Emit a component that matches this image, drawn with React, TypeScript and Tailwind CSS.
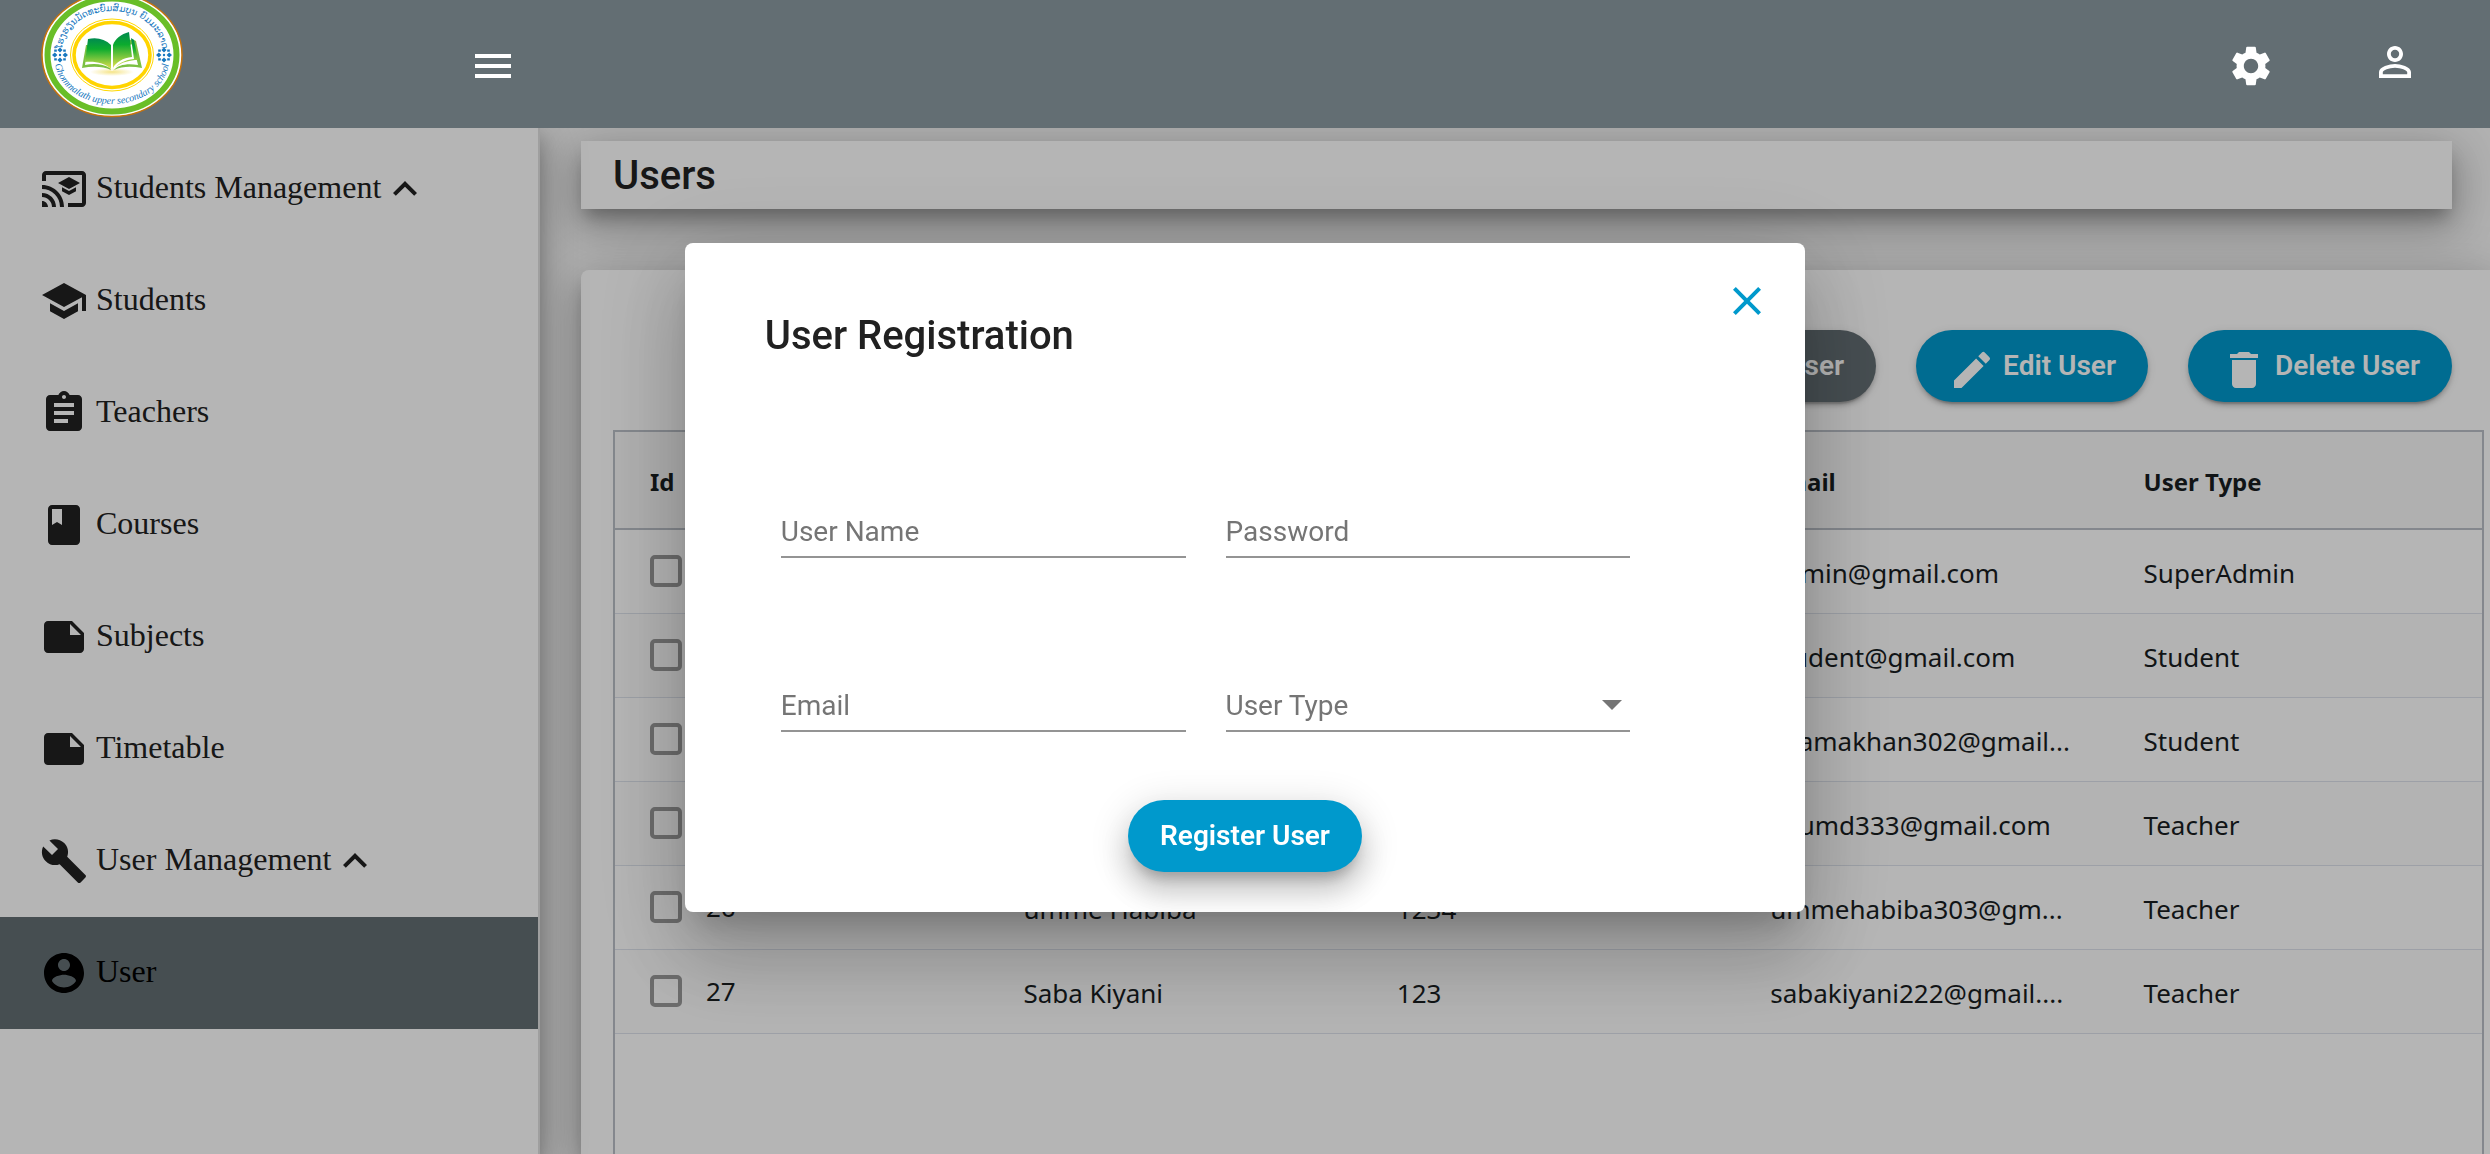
import type { ReactNode } from "react";
import {
  MdArrowDropDown,
  MdAssignment,
  MdBuild,
  MdCastForEducation,
  MdClass,
  MdClose,
  MdCreate,
  MdDelete,
  MdExpandLess,
  MdMenu,
  MdNote,
  MdPersonAdd,
  MdPersonOutline,
  MdSchool,
  MdSettings,
} from "react-icons/md";

function AccountCircle() {
  return (
    <svg viewBox="0 0 24 24" className="size-12 fill-current" aria-hidden="true">
      <path d="M12 2C6.48 2 2 6.48 2 12s4.48 10 10 10 10-4.48 10-10S17.52 2 12 2zm0 3c1.66 0 3 1.34 3 3s-1.34 3-3 3-3-1.34-3-3 1.34-3 3-3zm0 14.2c-2.5 0-4.71-1.28-6-3.22.03-1.99 4-3.08 6-3.08 1.99 0 5.97 1.09 6 3.08-1.29 1.94-3.5 3.22-6 3.22z" />
    </svg>
  );
}

function Ornament({ x }: { x: number }) {
  return (
    <g transform={`translate(${x} 55)`} fill="#1878c0">
      <path d="M0-7.5 2.6-5 0-2.6-2.6-5zM0 7.5 2.6 5 0 2.6-2.6 5zM-8 0-5.2-2.4-2.6 0-5.2 2.4zM8 0 5.2-2.4 2.6 0 5.2 2.4z" />
      <path d="M-5.8-5.4h2.6v2.2h-2.6zM3.2-5.4h2.6v2.2H3.2zM-5.8 3.2h2.6v2.2h-2.6zM3.2 3.2h2.6v2.2H3.2z" />
      <circle r="1.2" />
    </g>
  );
}

function SchoolLogo() {
  return (
    <svg
      viewBox="41 0 143 118"
      className="h-[118px] w-[143px] shrink-0 self-start"
      role="img"
      aria-label="Ghommalath upper secondary school"
    >
      <defs>
        <linearGradient id="page" x1="0" y1="0" x2="0" y2="1">
          <stop offset="0" stopColor="#008a50" />
          <stop offset="0.35" stopColor="#0cab2e" />
          <stop offset="1" stopColor="#e3e04c" />
        </linearGradient>
        <radialGradient id="glow">
          <stop offset="0" stopColor="#f5e487" />
          <stop offset="1" stopColor="#fff" />
        </radialGradient>
        <path id="arcTop" d="M62 51A50 40 0 0 1 162 51" />
        <path id="arcBottom" d="M55 60A57 44 0 0 0 169 60" />
      </defs>
      <ellipse cx="112" cy="55" rx="70" ry="61.5" fill="#fff" stroke="#c8730a" strokeWidth="1.5" />
      <ellipse cx="112" cy="55" rx="64.5" ry="56.5" fill="#fff" stroke="#69be28" strokeWidth="6" />
      <ellipse cx="112" cy="55" rx="41.5" ry="36" fill="#fff" stroke="#ffd800" strokeWidth="1" />
      <ellipse cx="112" cy="55" rx="38" ry="32.5" fill="#fff" stroke="#ffd400" strokeWidth="3.6" />
      <text fill="#1878c0" className="text-[9px] [font-family:'DejaVu_Sans',sans-serif]">
        <textPath href="#arcTop" startOffset="50%" textAnchor="middle">
          ໂຮງຮຽນມັດທະຍົມສົມບູນ ຍົມມະລາດ
        </textPath>
      </text>
      <text fill="#1878c0" className="text-[10px] italic [font-family:'Liberation_Serif',serif]">
        <textPath href="#arcBottom" startOffset="50%" textAnchor="middle">
          Ghommalath upper secondary school
        </textPath>
      </text>
      <Ornament x={60} />
      <Ornament x={164} />
      <ellipse cx="112" cy="72" rx="22" ry="4" fill="url(#glow)" />
      <path d="M86 45 82 68c10-2 21-2 29 2l-1-2c-7-4-16-5-25-3l3-20zM127 42l5-3 4 2 6 27c-10-2-20-2-28 2 4-5 13-7 24-5l-5-21-4 1z" fill="#7cc043" />
      <path d="M88 39c9-2 17 0 23 6v24c-6-6-16-8-26-7z" fill="url(#page)" />
      <path d="M113 45c2-6 8-11 16-13l3 25c-9 1-16 5-19 11z" fill="url(#page)" />
      <path d="M131 38l3 2 4 20c-8 0-16 2-22 7 3-4 9-7 18-8z" fill="url(#page)" />
      <path d="M112 44v27" stroke="#fff" strokeWidth="1" />
    </svg>
  );
}

function NavItem({
  icon,
  label,
  expandable,
  active,
}: {
  icon: ReactNode;
  label: string;
  expandable?: boolean;
  active?: boolean;
}) {
  return (
    <li>
      <a
        href="#"
        className={`flex h-28 items-center pl-10 text-[32px] [font-family:'Liberation_Serif',serif] ${
          active ? "bg-[#636e73] text-black" : "text-[#212121]"
        }`}
      >
        {icon}
        <span className="mb-1 ml-2">{label}</span>
        {expandable && <MdExpandLess className="size-12" />}
      </a>
    </li>
  );
}

function ActionButton({ icon, label, muted }: { icon: ReactNode; label: string; muted?: boolean }) {
  return (
    <button
      type="button"
      className={`flex h-[72px] items-center gap-[7px] rounded-full px-8 text-[28px] font-semibold text-white shadow-[0_6px_2px_-4px_rgba(0,0,0,.2),0_4px_4px_0_rgba(0,0,0,.14),0_2px_10px_0_rgba(0,0,0,.12)] ${
        muted ? "bg-[#636e73]" : "bg-[#0099cc]"
      }`}
    >
      <span className="mt-2">{icon}</span>
      {label}
    </button>
  );
}

const users = [
  { id: "1", name: "Admin", password: "admin", email: "admin@gmail.com", type: "SuperAdmin" },
  { id: "2", name: "Student", password: "student", email: "student@gmail.com", type: "Student" },
  { id: "24", name: "Usama Khan", password: "1234", email: "usamakhan302@gmail...", type: "Student" },
  { id: "25", name: "Kaumd", password: "1234", email: "kaumd333@gmail.com", type: "Teacher" },
  { id: "26", name: "umme Habiba", password: "1234", email: "ummehabiba303@gm...", type: "Teacher" },
  { id: "27", name: "Saba Kiyani", password: "123", email: "sabakiyani222@gmail....", type: "Teacher" },
];

const columns = ["Id", "User Name", "Password", "Email", "User Type"];

function UsersTable() {
  return (
    <div className="mr-[6px] mt-7 flex-1 border-x-2 border-t-2 border-[#babfc7] [font-family:'Noto_Sans',sans-serif]">
      <table className="w-full table-fixed border-collapse text-left text-[26px] text-[#181d1f]">
        <thead>
          <tr className="h-[97px] border-b-2 border-[#babfc7] bg-[#f8f8f8]">
            {columns.map((c) => (
              <th key={c} scope="col" className="pl-[35px] pt-1 text-2xl font-bold">
                {c}
              </th>
            ))}
          </tr>
        </thead>
        <tbody>
          {users.map((u) => (
            <tr key={u.id} className="h-[84px] border-b border-[#dde2eb] odd:bg-white even:bg-[#fcfcfc]">
              <td className="pl-[35px]">
                <div className="flex items-center gap-6">
                  <input
                    type="checkbox"
                    aria-label={`Select user ${u.id}`}
                    className="size-8 appearance-none rounded-[5px] border-4 border-[#999]"
                  />
                  {u.id}
                </div>
              </td>
              <td className="pl-[35px] pt-1">{u.name}</td>
              <td className="pl-[35px] pt-1">{u.password}</td>
              <td className="whitespace-nowrap pl-[35px] pt-1">{u.email}</td>
              <td className="pl-[35px] pt-1">{u.type}</td>
            </tr>
          ))}
        </tbody>
      </table>
    </div>
  );
}

const fieldClass =
  "h-[50px] w-full appearance-none rounded-none border-b-2 border-[#949494] bg-transparent text-[28px] text-[#757575] outline-none placeholder:text-[#757575] placeholder:opacity-100";

function TextField({ id, label, type = "text" }: { id: string; label: string; type?: string }) {
  return <input id={id} type={type} placeholder={label} aria-label={label} className={fieldClass} />;
}

function RegistrationDialog() {
  return (
    <div className="fixed inset-0 z-20 flex items-center justify-center bg-black/29">
      <div
        role="dialog"
        aria-modal="true"
        aria-labelledby="dialog-title"
        className="w-[45%] rounded-lg bg-white pb-10 shadow-[0_22px_30px_-14px_rgba(0,0,0,.2),0_48px_76px_6px_rgba(0,0,0,.14),0_18px_92px_16px_rgba(0,0,0,.12)]"
      >
        <div className="flex items-start justify-between pl-20 pr-[34px] pt-[34px]">
          <h2 id="dialog-title" className="mt-[34px] text-[40px] font-medium leading-[50px] text-[#212121]">
            User Registration
          </h2>
          <button type="button" aria-label="Close" className="text-[#0099cc]">
            <MdClose className="size-12" />
          </button>
        </div>
        <form className="flex flex-col">
          <div className="mt-[147px] grid grid-cols-2 gap-x-10 gap-y-[124px] pl-24 pr-[175px]">
            <TextField id="user-name" label="User Name" />
            <TextField id="password" label="Password" type="password" />
            <TextField id="email" label="Email" type="email" />
            <div className="relative">
              <select id="user-type" aria-label="User Type" className={fieldClass}>
                <option>User Type</option>
                <option>Student</option>
                <option>Teacher</option>
                <option>SuperAdmin</option>
              </select>
              <MdArrowDropDown className="pointer-events-none absolute -right-1.5 -top-0.5 size-12 text-[#757575]" />
            </div>
          </div>
          <button
            type="submit"
            className="mt-[68px] h-[72px] self-center rounded-full bg-[#0099cc] px-8 text-[28px] font-semibold text-white shadow-[0_12px_12px_-6px_rgba(0,0,0,.2),0_20px_28px_2px_rgba(0,0,0,.14),0_8px_36px_6px_rgba(0,0,0,.12)]"
          >
            Register User
          </button>
        </form>
      </div>
    </div>
  );
}

export default function App() {
  return (
    <div className="flex h-screen flex-col overflow-hidden bg-[#fafafa] [font-family:Roboto,sans-serif]">
      <header className="relative z-30 flex h-32 shrink-0 items-center bg-[#636e73] pl-[41px] pr-[71px] pt-1 text-white">
        <div className="-mt-1 self-start">
          <SchoolLogo />
        </div>
        <button type="button" aria-label="Toggle menu" className="ml-[285px]">
          <MdMenu className="size-12" />
        </button>
        <div className="ml-auto flex items-center gap-24">
          <button type="button" aria-label="Settings">
            <MdSettings className="size-12" />
          </button>
          <button type="button" aria-label="Account" className="mb-2">
            <MdPersonOutline className="size-12" />
          </button>
        </div>
      </header>

      <div className="flex min-h-0 flex-1">
        <nav className="relative z-10 w-[540px] shrink-0 border-r-2 border-[#e0e0e0] bg-white pt-[5px] shadow-[0_10px_16px_0_rgba(0,0,0,.2),0_16px_36px_4px_rgba(0,0,0,.14),0_8px_44px_8px_rgba(0,0,0,.12)]">
          <ul>
            <NavItem icon={<MdCastForEducation className="size-12" />} label="Students Management" expandable />
            <NavItem icon={<MdSchool className="size-12" />} label="Students" />
            <NavItem icon={<MdAssignment className="size-12" />} label="Teachers" />
            <NavItem icon={<MdClass className="size-12" />} label="Courses" />
            <NavItem icon={<MdNote className="size-12" />} label="Subjects" />
            <NavItem icon={<MdNote className="size-12" />} label="Timetable" />
            <NavItem icon={<MdBuild className="size-12" />} label="User Management" expandable />
            <NavItem icon={<AccountCircle />} label="User" active />
          </ul>
        </nav>

        <main className="flex min-w-0 flex-1 flex-col pl-[41px] pt-[13px]">
          <h1 className="mr-[38px] bg-white pb-[9px] pt-[11px] pl-8 text-[40px] font-medium leading-[48px] text-[#212121] shadow-[0_12px_16px_-4px_rgba(0,0,0,.26),0_16px_40px_4px_rgba(0,0,0,.18),0_10px_56px_8px_rgba(0,0,0,.12)]">
            Users
          </h1>
          <section className="mt-[61px] flex flex-1 flex-col rounded-tl-lg bg-white pl-8 pt-[60px] shadow-[0_12px_16px_-4px_rgba(0,0,0,.26),0_16px_40px_4px_rgba(0,0,0,.18),0_10px_56px_8px_rgba(0,0,0,.12)]">
            <div className="flex justify-end gap-10 pr-[38px]">
              <ActionButton icon={<MdPersonAdd className="size-12" />} label="Add User" muted />
              <ActionButton icon={<MdCreate className="size-12" />} label="Edit User" />
              <ActionButton icon={<MdDelete className="size-12" />} label="Delete User" />
            </div>
            <UsersTable />
          </section>
        </main>
      </div>

      <RegistrationDialog />
    </div>
  );
}
